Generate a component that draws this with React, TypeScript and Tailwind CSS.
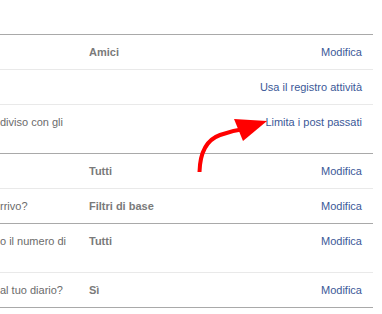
import React from "react";

type Row = {
  left: string;
  twoLines?: boolean;
  mid: string;
  right: string;
  border: "dark" | "light";
};

const rows: Row[] = [
  { left: "", mid: "Amici", right: "Modifica", border: "dark" },
  { left: "", mid: "", right: "Usa il registro attività", border: "light" },
  { left: "diviso con gli", twoLines: true, mid: "", right: "Limita i post passati", border: "light" },
  { left: "", mid: "Tutti", right: "Modifica", border: "dark" },
  { left: "rrivo?", mid: "Filtri di base", right: "Modifica", border: "light" },
  { left: "o il numero di", twoLines: true, mid: "Tutti", right: "Modifica", border: "dark" },
  { left: "al tuo diario?", mid: "Sì", right: "Modifica", border: "light" },
];

export default function App() {
  return (
    <div className="relative w-[382px] h-[314px] overflow-hidden bg-white font-['Liberation_Sans',Arial,sans-serif] text-[11px] leading-[14px]">
      <div className="h-[34px]" />
      <div className="w-[373px] border-b border-[#a9a9a9]">
        {rows.map((r, i) => (
          <div
            key={i}
            className={
              "grid grid-cols-[89px_1fr_auto] py-[10px] pr-[11px] border-t " +
              (r.border === "dark" ? "border-[#a9a9a9]" : "border-[#e9e9e9]")
            }
          >
            <div className="text-[#6b6b6b] whitespace-nowrap">
              {r.left}
              {r.twoLines ? (
                <>
                  <br />
                  {"\u00a0"}
                </>
              ) : null}
            </div>
            <div className="font-bold text-[#7a7a7a]">{r.mid}</div>
            <div className="text-[#3b5998] text-right">{r.right}</div>
          </div>
        ))}
      </div>
      <svg
        className="absolute left-0 top-0 pointer-events-none"
        width="382"
        height="314"
        viewBox="0 0 382 314"
      >
        <path
          d="M199.5 172 C200 152 206 140 220 135 C228 132 236 130 244 129"
          fill="none"
          stroke="#ff0000"
          strokeWidth="4"
          strokeLinecap="butt"
        />
        <polygon points="234,119 267,121 243,141" fill="#ff0000" />
      </svg>
    </div>
  );
}
